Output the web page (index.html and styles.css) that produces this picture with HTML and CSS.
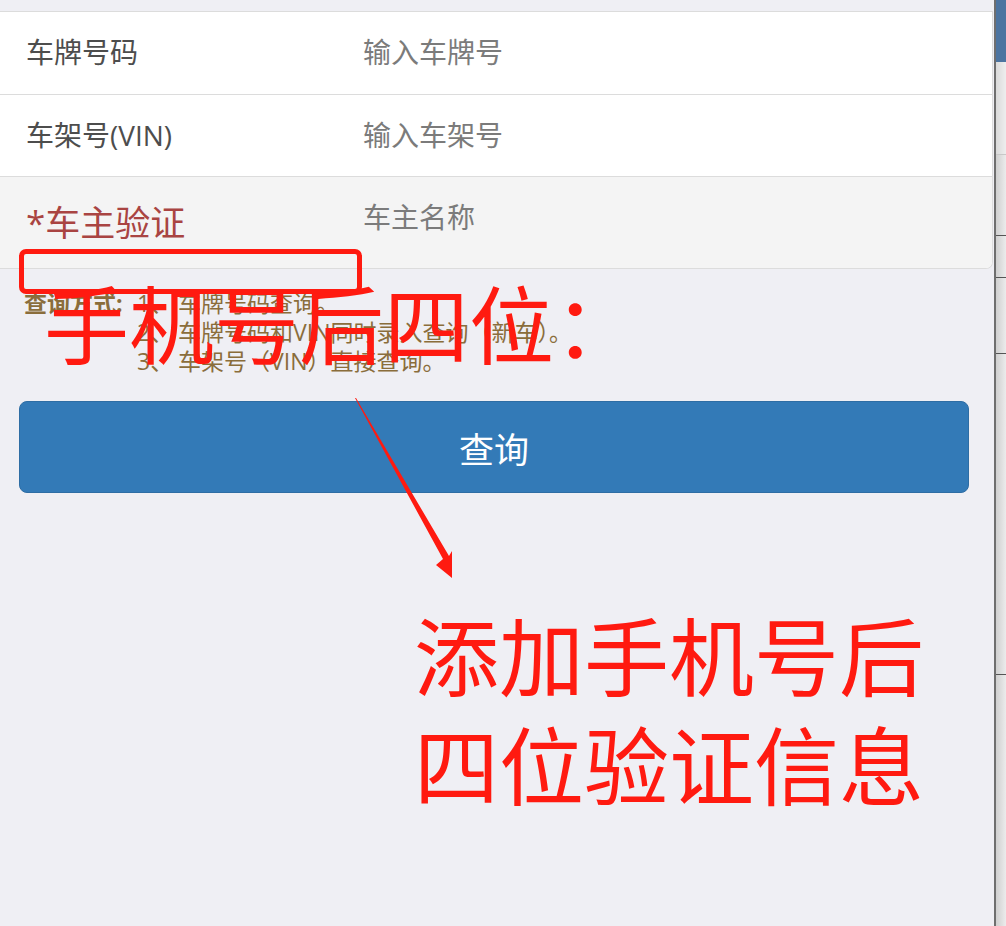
FILE: index.html
```html
<!DOCTYPE html>
<html lang="zh-CN">
<head>
<meta charset="utf-8">
<title>车辆查询</title>
<link rel="stylesheet" href="styles.css">
</head>
<body>
<div class="page">
  <main class="main">
    <div class="form-list">
      <div class="row row-plate">
        <div class="label">车牌号码</div>
        <div class="placeholder">输入车牌号</div>
      </div>
      <div class="row row-vin">
        <div class="label">车架号(VIN)</div>
        <div class="placeholder">输入车架号</div>
      </div>
      <div class="row row-owner">
        <div class="label label-required">*车主验证</div>
        <div class="placeholder placeholder-top">车主名称</div>
      </div>
    </div>

    <div class="query-help">
      <div class="help-title">查询方式:</div>
      <div class="help-items">
        <div class="help-item"><span class="num">1、</span>车牌号码查询。</div>
        <div class="help-item"><span class="num">2、</span>车牌号码和VIN同时录入查询（新车）。</div>
        <div class="help-item"><span class="num">3、</span>车架号（VIN）直接查询。</div>
      </div>
    </div>

    <button class="btn-query" type="button">查询</button>

    <div class="anno-box"></div>
    <div class="anno-text anno-small">手机号后四位：</div>
    <div class="anno-text anno-big">添加手机号后<br>四位验证信息</div>
    <svg class="anno-arrow" width="120" height="200" viewBox="345 390 120 200" xmlns="http://www.w3.org/2000/svg">
      <polygon fill="#ff1a10" points="355,398 356,398 449,556 452,551 452,578 436,565 443,559"/>
    </svg>
  </main>
  <div class="divider"></div>
  <aside class="side-strip">
    <div class="strip-top"></div>
    <div class="strip-seg seg-a"></div>
    <div class="strip-seg seg-b"></div>
    <div class="strip-seg seg-c"></div>
    <div class="strip-seg seg-d"></div>
    <div class="strip-seg seg-e"></div>
    <div class="strip-seg seg-f"></div>
  </aside>
</div>
</body>
</html>
```

FILE: styles.css
```css
html, body {
  margin: 0;
  padding: 0;
}

body {
  background: #efeff4;
  font-family: "Open Sans", "Noto Sans CJK SC", sans-serif;
  width: 1006px;
  height: 926px;
  overflow: hidden;
}

.page {
  display: flex;
  height: 926px;
}

.main {
  position: relative;
  width: 994px;
  flex: none;
  padding-top: 11px;
}

.form-list {
  width: 992px;
  border-top: 1px solid #dcdcdc;
  border-right: 1px solid #dcdcdc;
  border-bottom: 1px solid #dcdcdc;
  border-bottom-right-radius: 7px;
  overflow: hidden;
  background: #fff;
}

.row {
  display: grid;
  grid-template-columns: 363px 1fr;
  align-items: center;
  border-bottom: 1px solid #dcdcdc;
}

.row-plate { height: 82px; }
.row-vin { height: 81px; }
.row-owner {
  height: 91px;
  border-bottom: none;
  background: #f4f4f4;
}

.label {
  padding-left: 26px;
  font-size: 28px;
  color: #4d4d4d;
  line-height: 1.2;
}

.label-required {
  font-size: 35px;
  color: #a94442;
}

.placeholder {
  font-size: 28px;
  color: #7b7b7b;
  line-height: 1.2;
}

.placeholder-top {
  padding-bottom: 10px;
}

.query-help {
  display: flex;
  margin-top: 20px;
  padding-left: 24px;
  color: #8a6d3b;
  font-size: 23px;
  line-height: 29px;
}

.help-title {
  width: 113px;
  font-weight: bold;
}

.help-item .num {
  display: inline-block;
  width: 41px;
}

.btn-query {
  display: block;
  width: 950px;
  height: 92px;
  margin: 25px 0 0 19px;
  background: #337ab7;
  border: 1px solid #2e6da4;
  border-radius: 8px;
  color: #fff;
  font-family: "Noto Sans CJK SC", sans-serif;
  font-size: 35px;
  padding: 0;
}

/* annotation overlay */
.anno-box {
  position: absolute;
  left: 19px;
  top: 249px;
  width: 333px;
  height: 35px;
  border: 5px solid #ff1a10;
  border-radius: 7px;
}

.anno-text {
  position: absolute;
  color: #ff1a10;
  font-family: "Noto Sans CJK SC", sans-serif;
  white-space: nowrap;
}

.anno-small {
  left: 44px;
  top: 269px;
  font-size: 85px;
  line-height: 104px;
}

.anno-big {
  left: 414px;
  top: 598px;
  font-size: 85px;
  line-height: 109px;
}

.anno-arrow {
  position: absolute;
  left: 345px;
  top: 390px;
}

/* right edge */
.divider {
  width: 2px;
  flex: none;
  background: #6e6e6e;
}

.side-strip {
  width: 10px;
  flex: none;
  display: flex;
  flex-direction: column;
}

.strip-top {
  height: 62px;
  background: #4c74a0;
}

.strip-seg {
  background: linear-gradient(to right, #cfcfcf, #ececec);
  border-bottom: 1px solid #555;
}

.seg-a { height: 92px; background: linear-gradient(to right, #dadada, #eeeeee); border-bottom-color: #c8c8c8; }
.seg-b { height: 80px; }
.seg-c { height: 41px; }
.seg-d { height: 75px; }
.seg-e { height: 320px; }
.seg-f { flex: 1; border-bottom: none; }
```
